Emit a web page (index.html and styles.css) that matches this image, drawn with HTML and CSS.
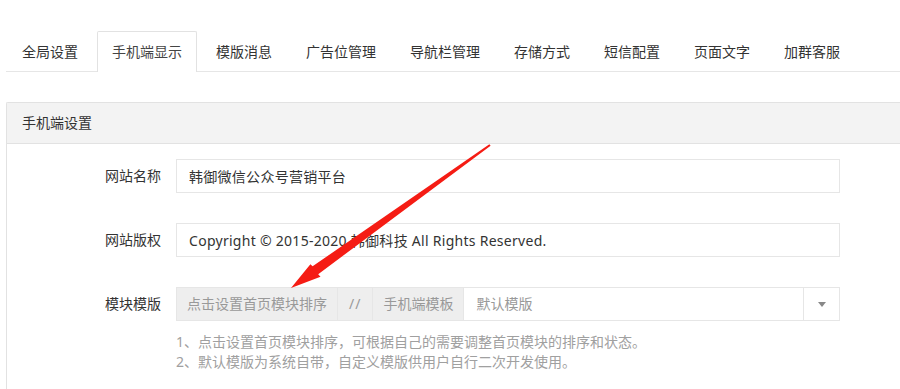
FILE: index.html
```
<!DOCTYPE html>
<html>
<head>
<meta charset="utf-8">
<title>手机端显示</title>
<link rel="stylesheet" href="styles.css">
</head>
<body>
<div class="page">
    <ul class="tab-title">
        <li>全局设置</li>
        <li class="this">手机端显示</li>
        <li>模版消息</li>
        <li>广告位管理</li>
        <li>导航栏管理</li>
        <li>存储方式</li>
        <li>短信配置</li>
        <li>页面文字</li>
        <li>加群客服</li>
    </ul>

    <div class="panel">
        <div class="panel-heading">手机端设置</div>
        <div class="panel-body">
            <div class="form-item">
                <label class="form-label">网站名称</label>
                <div class="form-block">
                    <input class="form-control" type="text" value="韩御微信公众号营销平台">
                </div>
            </div>
            <div class="form-item">
                <label class="form-label">网站版权</label>
                <div class="form-block">
                    <input class="form-control" type="text" value="Copyright © 2015-2020 韩御科技 All Rights Reserved.">
                </div>
            </div>
            <div class="form-item">
                <label class="form-label">模块模版</label>
                <div class="form-block">
                    <div class="input-group">
                        <span class="addon">点击设置首页模块排序</span>
                        <span class="addon slash">//</span>
                        <span class="addon">手机端模板</span>
                        <span class="select">默认模版</span>
                        <span class="addon caret-box"><i class="caret"></i></span>
                    </div>
                    <div class="help-block">
                        1、点击设置首页模块排序，可根据自己的需要调整首页模块的排序和状态。<br>
                        2、默认模版为系统自带，自定义模版供用户自行二次开发使用。
                    </div>
                </div>
            </div>
        </div>
    </div>

    <svg class="arrow" width="900" height="389" viewBox="0 0 900 389">
        <polygon fill="#f51c14" points="490.6,145.7 489.4,144.3 312.6,266.3 310.4,264.2 291,288 320.5,276.8 318.2,274.2"/>
    </svg>
</div>
</body>
</html>
```

FILE: styles.css
```
*{ padding:0; margin:0; list-style:none; box-sizing:border-box;}
html,body{ overflow:hidden; background:#fff;}
body{
  font-family:"Noto Sans","Noto Sans CJK SC",sans-serif;
  font-size:14px;
  color:#333;
}
.page{
  position:relative;
  width:900px;
  height:389px;
  padding:31px 0 0 6px;
  overflow:hidden;
}

.tab-title{
  display:flex;
  gap:4px;
  height:41px;
  padding-left:1px;
  border-bottom:1px solid #e6e6e6;
}
.tab-title li{
  height:40px;
  line-height:40px;
  padding:0 14px;
  text-align:center;
  white-space:nowrap;
  border:1px solid transparent;
  border-bottom:0;
}
.tab-title li.this{
  height:41px;
  border-color:#e2e2e2;
  border-radius:2px 2px 0 0;
  background:#fff;
  line-height:39px;
  color:#444;
}

.panel{
  width:894px;
  height:287px;
  margin-top:30px;
  border:1px solid #e2e2e2;
  border-right:0;
  border-bottom:0;
  border-radius:2px 0 0 0;
}
.panel-heading{
  height:41px;
  line-height:40px;
  padding-left:15px;
  background:#f3f3f3;
  border-bottom:1px solid #e2e2e2;
}
.panel-body{ padding-top:15px;}

.form-item{ display:flex; margin-bottom:30px;}
.form-label{
  width:169px;
  padding-right:15px;
  text-align:right;
  line-height:34px;
}
.form-block{ width:664px;}
.form-control{
  display:block;
  width:100%;
  height:34px;
  padding:0 12px;
  border:1px solid #e6e6e6;
  font:inherit;
  letter-spacing:.28px;
  color:#333;
  outline:none;
}

.input-group{
  display:flex;
  height:34px;
  border:1px solid #e6e6e6;
}
.addon{
  padding:0 10px;
  line-height:32px;
  background:#eee;
  color:#999;
  border-right:1px solid #e6e6e6;
  white-space:nowrap;
}
.addon.slash{ padding:0 11px; letter-spacing:1px;}
.select{
  flex:1;
  padding-left:12px;
  line-height:32px;
  color:#999;
  border-right:1px solid #e6e6e6;
}
.caret-box{
  width:35px;
  background:#fff;
  border-right:0;
  display:flex;
  align-items:center;
  justify-content:center;
}
.caret{
  width:0;
  height:0;
  border-left:4px solid transparent;
  border-right:4px solid transparent;
  border-top:5px solid #888;
}
.help-block{
  margin-top:11px;
  line-height:20px;
  color:#a0a0a0;
}

.arrow{ position:absolute; left:0; top:0; pointer-events:none;}
```
